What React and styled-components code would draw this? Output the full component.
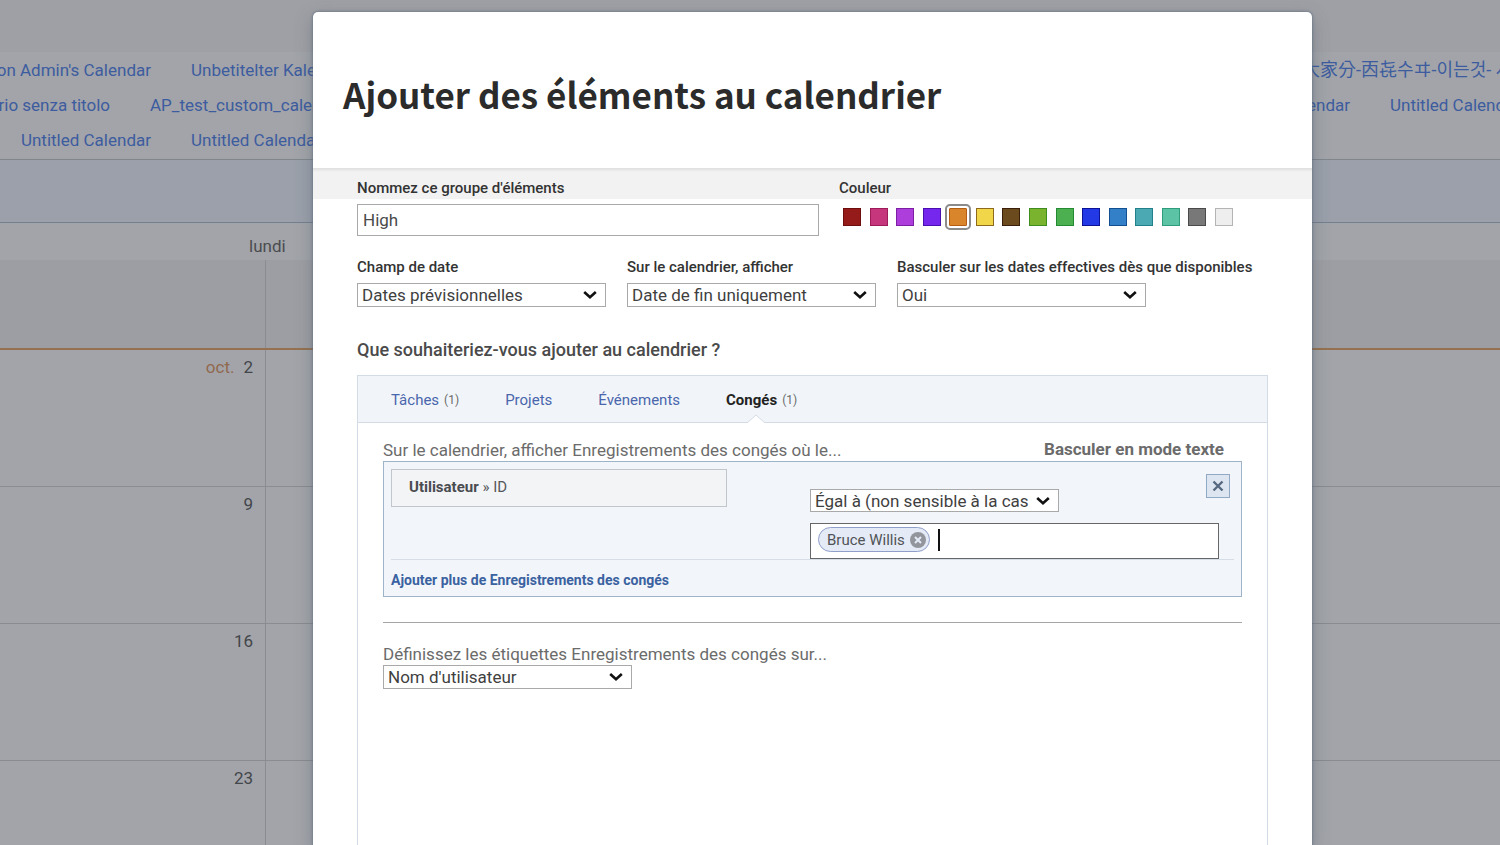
import React, { useState } from "react";
import styled, { createGlobalStyle, css } from "styled-components";

const GlobalStyle = createGlobalStyle`
  *, *::before, *::after { box-sizing: border-box; }
  body {
    margin: 0;
    overflow: hidden;
    font-family: Roboto, "Noto Sans CJK KR", "Noto Sans CJK JP", sans-serif;
    color: #3b3d40;
    background: #a2a4a9;
  }
  button, input, select { font-family: inherit; }
`;

const Page = styled.div`
  position: relative;
  height: 100vh;
  overflow: hidden;
`;

/* ---------- calendar page behind the dialog ---------- */

const CalendarPage = styled.div`
  display: flex;
  flex-direction: column;
  height: 100%;
  background: #a2a4a9;
`;

const TopBar = styled.div`
  flex: none;
  height: 52px;
  background: #9fa0a5;
`;

const CalendarLinks = styled.nav`
  flex: none;
  height: 108px;
  border-bottom: 1px solid #81868c;
`;

const LinkRow = styled.div`
  display: flex;
  height: 35px;
  align-items: center;
  justify-content: space-between;
  white-space: nowrap;
`;

const LinkGroup = styled.div`
  display: flex;
  gap: 40px;
  width: ${(p) => p.$width}px;
  overflow: hidden;
`;

const CalendarLink = styled.a`
  display: flex;
  flex: none;
  justify-content: flex-end;
  width: ${(p) => (p.$width ? `${p.$width}px` : "auto")};
  font-size: ${(p) => p.$size || 17}px;
  line-height: 30px;
  color: #3d5c9f;
  text-decoration: none;
`;

const Toolbar = styled.div`
  flex: none;
  height: 63px;
  background: #9ba0aa;
  border-bottom: 1px solid #748090;
`;

const DayNames = styled.div`
  flex: none;
  height: 37px;
  padding-left: 249px;
  font-size: 17px;
  line-height: 46px;
  color: #4b4c50;
`;

const Week = styled.div`
  display: flex;
  flex: none;
  height: ${(p) => (p.$past ? 90 : 137)}px;
  background: ${(p) => (p.$past ? "#9d9ea3" : "transparent")};
  border-bottom: ${(p) => (p.$past ? "2px solid #95714f" : "1px solid #898c91")};
`;

const Day = styled.div`
  width: 266px;
  padding: 5px 12px;
  border-right: 1px solid #898c91;
  font-size: 17px;
  line-height: 24px;
  text-align: right;
  color: #43464b;
`;

const Month = styled.span`
  margin-right: 9px;
  color: #91694f;
`;

/* ---------- dialog ---------- */

const Overlay = styled.div`
  position: absolute;
  inset: 0;
  display: flex;
  padding: 12px 188px 0 313px;
`;

const Dialog = styled.section`
  display: flex;
  flex: 1;
  flex-direction: column;
  min-width: 0;
  background: #fff;
  border-radius: 5px 5px 0 0;
  box-shadow: 0 0 2px 1px rgba(90, 105, 125, 0.5), 0 6px 18px rgba(60, 75, 95, 0.35);
`;

const DialogHeader = styled.header`
  flex: none;
  height: 156px;
  padding: 54px 30px 0;
`;

const Title = styled.h1`
  margin: 0;
  font-family: "Noto Sans CJK SC", "Noto Sans", sans-serif;
  font-size: 35px;
  font-weight: 700;
  line-height: 56px;
  color: #2b2b2b;
  white-space: nowrap;
`;

const Form = styled.form`
  display: flex;
  flex: 1;
  flex-direction: column;
  padding: 10px 44px 0;
  background: linear-gradient(#dedede 0, #e8e8e8 2px, #f2f2f2 4px, #f2f2f2 31px, #fff 31px);
`;

const FieldRow = styled.div`
  display: flex;
  gap: ${(p) => p.$gap}px;
  margin-bottom: ${(p) => p.$after}px;
`;

const Field = styled.div`
  display: flex;
  flex: none;
  flex-direction: column;
  gap: 6px;
  width: ${(p) => p.$width}px;
`;

const labelText = css`
  font-size: 15px;
  font-weight: 500;
  line-height: 20px;
  color: #333;
  white-space: nowrap;
`;

const Label = styled.label`
  ${labelText}
`;

const Swatches = styled.fieldset`
  width: 394px;
  min-width: 0;
  margin: 0;
  padding: 0;
  border: 0;

  legend {
    ${labelText}
    padding: 0;
  }
`;

const SwatchRow = styled.div`
  display: flex;
  justify-content: space-between;
  padding: 10px 0 0 4px;
`;

const Swatch = styled.input`
  appearance: none;
  width: 18px;
  height: 18px;
  margin: 0;
  background: ${(p) => p.$fill};
  border: 1px solid ${(p) => p.$edge};

  &:checked {
    outline: 2px solid #8b8b8b;
    outline-offset: 2px;
    border-radius: 1px;
  }
`;

const TextInput = styled.input`
  height: 32px;
  padding: 0 5px;
  border: 1px solid #a9a9a9;
  border-radius: 0;
  font-size: 17px;
  color: #4a4a4a;
`;

const SelectBox = styled.div`
  position: relative;
  width: 249px;
  height: 24px;

  svg {
    position: absolute;
    top: 7px;
    right: 9px;
    pointer-events: none;
  }
`;

const NativeSelect = styled.select`
  appearance: none;
  width: 100%;
  height: 100%;
  padding: 0 28px 0 4px;
  background: #fff;
  border: 1px solid #a9a9a9;
  border-radius: 0;
  font-size: 17px;
  color: #3f3f3f;
`;

const Question = styled.h2`
  margin: 0 0 13px;
  font-size: 18px;
  font-weight: 500;
  line-height: 24px;
  color: #4a4a4a;
`;

const Panel = styled.div`
  display: flex;
  flex: 1;
  flex-direction: column;
  border: 1px solid #d3dce6;
  border-bottom: 0;
`;

const Tabs = styled.div`
  display: flex;
  gap: 46px;
  height: 47px;
  padding: 0 33px;
  background: #f1f5f9;
  border-bottom: 1px solid #d3dce6;
`;

const Tab = styled.button`
  position: relative;
  display: flex;
  align-items: center;
  gap: 5px;
  height: 48px;
  padding: 0;
  background: none;
  border: 0;
  font-size: 15px;
  font-weight: ${(p) => (p.$active ? 700 : 400)};
  color: ${(p) => (p.$active ? "#222" : "#4a66ac")};

  svg {
    position: absolute;
    bottom: 1px;
    left: 20px;
  }
`;

const Count = styled.span`
  font-size: 12px;
  font-weight: 400;
  color: #6b6b6b;
`;

const PanelBody = styled.div`
  padding: 16px 25px 0;
`;

const SectionHead = styled.div`
  display: flex;
  align-items: flex-start;
  justify-content: space-between;
  padding-right: 18px;
`;

const Caption = styled.label`
  display: block;
  font-size: 17px;
  line-height: 22px;
  color: #6b6b6b;
`;

const TextModeButton = styled.button`
  padding: 0;
  background: none;
  border: 0;
  font-size: 17px;
  font-weight: 700;
  line-height: 20px;
  color: #6b6b6b;
`;

const FilterBox = styled.div`
  padding: 7px 7px 5px;
  background: #f2f6fa;
  border: 1px solid #9db3c7;
`;

const Filter = styled.div`
  display: flex;
  height: 91px;
  border-bottom: 1px solid #d5dde6;
`;

const FilterField = styled.div`
  flex: none;
  width: 336px;
  height: 38px;
  padding: 0 17px;
  background: #f3f4f6;
  border: 1px solid #c0c6cc;
  font-size: 15px;
  line-height: 35px;
  color: #55585c;

  strong { font-weight: 700; color: #4a4c50; }
`;

const FilterRule = styled.div`
  display: flex;
  flex: 1;
  flex-direction: column;
  gap: 11px;
  min-width: 0;
  margin-left: 83px;
  padding-top: 20px;
`;

const TokenInput = styled.div`
  display: flex;
  flex: none;
  align-items: center;
  gap: 8px;
  height: 36px;
  margin-right: -13px;
  padding: 0 7px 3px;
  background: #fff;
  border: 1px solid #666;

  input {
    flex: 1;
    min-width: 0;
    height: 24px;
    padding: 0;
    border: 0;
    outline: 0;
    font-size: 17px;
  }
`;

const Caret = styled.span`
  width: 2px;
  height: 22px;
  background: #111;
`;

const Token = styled.span`
  display: flex;
  align-items: center;
  gap: 5px;
  height: 25px;
  padding: 0 3px 0 8px;
  background: #e4ebf6;
  border: 1px solid #8f9fc9;
  border-radius: 13px;
  font-size: 15px;
  color: #505357;
  white-space: nowrap;
`;

const TokenRemove = styled.button`
  display: flex;
  padding: 0;
  background: none;
  border: 0;
`;

const RemoveFilter = styled.button`
  display: flex;
  flex: none;
  align-items: center;
  justify-content: center;
  width: 24px;
  height: 24px;
  margin: 5px 4px 0 0;
  padding: 0;
  background: #dde6f0;
  border: 1px solid #90a9c4;
`;

const AddMore = styled.a`
  display: block;
  margin-top: 10px;
  padding-bottom: 1px;
  font-size: 14px;
  font-weight: 700;
  line-height: 20px;
  color: #3b62a0;
  text-decoration: none;
`;

const Divider = styled.hr`
  margin: 25px 0 20px;
  border: 0;
  border-top: 1px solid #a6a6a6;
`;

const COLORS = [
  ["Rouge", "#951b1b", "#6e0d0d"],
  ["Rose", "#c6367c", "#9c1c5a"],
  ["Violet", "#ad3edb", "#7c1fa5"],
  ["Indigo", "#7527ee", "#4a0fb0"],
  ["Orange", "#d9852b", "#b55d12"],
  ["Jaune", "#f2d64a", "#8d6a1c"],
  ["Marron", "#6b4a1e", "#3a200a"],
  ["Vert clair", "#7ab32e", "#3f8d1e"],
  ["Vert", "#4caf50", "#248a34"],
  ["Bleu", "#2439e6", "#0c1396"],
  ["Azur", "#3480c8", "#12508f"],
  ["Sarcelle", "#4ba9b4", "#21808c"],
  ["Menthe", "#5cc4a5", "#2f9c7d"],
  ["Gris", "#787878", "#4a4a4a"],
  ["Blanc", "#eeeeee", "#b4b4b4"],
];

function Select({ id, label, options }) {
  return (
    <SelectBox>
      <NativeSelect id={id} aria-label={label}>
        {options.map((o) => (
          <option key={o}>{o}</option>
        ))}
      </NativeSelect>
      <svg width="14" height="10" viewBox="0 0 14 10" fill="none" aria-hidden="true">
        <path d="M1.2 2 L7 7.3 L12.8 2" stroke="#111" strokeWidth="2.6" />
      </svg>
    </SelectBox>
  );
}

function Background() {
  return (
    <CalendarPage>
      <TopBar />
      <CalendarLinks>
        <LinkRow>
          <LinkGroup $width={320}>
            <CalendarLink href="#" $width={151}>on Admin's Calendar</CalendarLink>
            <CalendarLink href="#">Unbetitelter Kalender</CalendarLink>
          </LinkGroup>
          <LinkGroup $width={198}>
            <CalendarLink href="#" $size={18}>大家分-㐁㐂수ヰ-이는것- 사</CalendarLink>
          </LinkGroup>
        </LinkRow>
        <LinkRow>
          <LinkGroup $width={320}>
            <CalendarLink href="#" $width={110}>rio senza titolo</CalendarLink>
            <CalendarLink href="#">AP_test_custom_calendar</CalendarLink>
          </LinkGroup>
          <LinkGroup $width={290}>
            <CalendarLink href="#" $width={140}>Untitled Calendar</CalendarLink>
            <CalendarLink href="#">Untitled Calendar</CalendarLink>
          </LinkGroup>
        </LinkRow>
        <LinkRow>
          <LinkGroup $width={320}>
            <CalendarLink href="#" $width={151}>Untitled Calendar</CalendarLink>
            <CalendarLink href="#">Untitled Calendar</CalendarLink>
          </LinkGroup>
        </LinkRow>
      </CalendarLinks>
      <Toolbar />
      <DayNames>lundi</DayNames>
      <Week $past>
        <Day />
      </Week>
      <Week>
        <Day>
          <Month>oct.</Month>2
        </Day>
      </Week>
      <Week>
        <Day>9</Day>
      </Week>
      <Week>
        <Day>16</Day>
      </Week>
      <Week>
        <Day>23</Day>
      </Week>
    </CalendarPage>
  );
}

const TABS = [
  { name: "Tâches", count: 1 },
  { name: "Projets" },
  { name: "Événements" },
  { name: "Congés", count: 1 },
];

export default function App() {
  const [color, setColor] = useState("Orange");
  const [tab, setTab] = useState("Congés");

  return (
    <Page>
      <GlobalStyle />
      <Background />
      <Overlay>
        <Dialog role="dialog" aria-labelledby="dialog-title">
          <DialogHeader>
            <Title id="dialog-title">Ajouter des éléments au calendrier</Title>
          </DialogHeader>
          <Form>
            <FieldRow $gap={20} $after={21}>
              <Field $width={462}>
                <Label htmlFor="group-name">Nommez ce groupe d'éléments</Label>
                <TextInput id="group-name" defaultValue="High" />
              </Field>
              <Swatches>
                <legend>Couleur</legend>
                <SwatchRow>
                  {COLORS.map(([name, fill, edge]) => (
                    <Swatch
                      key={name}
                      type="radio"
                      name="color"
                      aria-label={name}
                      $fill={fill}
                      $edge={edge}
                      checked={color === name}
                      onChange={() => setColor(name)}
                    />
                  ))}
                </SwatchRow>
              </Swatches>
            </FieldRow>
            <FieldRow $gap={21} $after={31}>
              <Field $width={249}>
                <Label htmlFor="date-field">Champ de date</Label>
                <Select id="date-field" options={["Dates prévisionnelles"]} />
              </Field>
              <Field $width={249}>
                <Label htmlFor="show-on">Sur le calendrier, afficher</Label>
                <Select id="show-on" options={["Date de fin uniquement"]} />
              </Field>
              <Field $width={249}>
                <Label htmlFor="actual">Basculer sur les dates effectives dès que disponibles</Label>
                <Select id="actual" options={["Oui"]} />
              </Field>
            </FieldRow>
            <Question>Que souhaiteriez-vous ajouter au calendrier ?</Question>
            <Panel>
              <Tabs role="tablist">
                {TABS.map(({ name, count }) => (
                  <Tab
                    key={name}
                    type="button"
                    role="tab"
                    aria-selected={tab === name}
                    $active={tab === name}
                    onClick={() => setTab(name)}
                  >
                    {name}
                    {count && <Count>({count})</Count>}
                    {tab === name && (
                      <svg width="20" height="9" viewBox="0 0 20 9" aria-hidden="true">
                        <path d="M1 9 L10 1 L19 9" fill="#fff" stroke="#d3dce6" />
                      </svg>
                    )}
                  </Tab>
                ))}
              </Tabs>
              <PanelBody>
                <SectionHead>
                  <Caption as="span">Sur le calendrier, afficher Enregistrements des congés où le...</Caption>
                  <TextModeButton type="button">Basculer en mode texte</TextModeButton>
                </SectionHead>
                <FilterBox>
                  <Filter>
                    <FilterField>
                      <strong>Utilisateur</strong> » ID
                    </FilterField>
                    <FilterRule>
                      <Select label="Condition" options={["Égal à (non sensible à la cas"]} />
                      <TokenInput>
                        <Token>
                          Bruce Willis
                          <TokenRemove type="button" aria-label="Retirer Bruce Willis">
                            <svg width="16" height="16" viewBox="0 0 16 16" aria-hidden="true">
                              <circle cx="8" cy="8" r="8" fill="#92969c" />
                              <path d="M5 5 L11 11 M11 5 L5 11" stroke="#e4ebf6" strokeWidth="2" />
                            </svg>
                          </TokenRemove>
                        </Token>
                        <Caret />
                        <input aria-label="Utilisateur" />
                      </TokenInput>
                    </FilterRule>
                    <RemoveFilter type="button" aria-label="Supprimer le filtre">
                      <svg width="12" height="12" viewBox="0 0 12 12" aria-hidden="true">
                        <path d="M1.5 1.5 L10.5 10.5 M10.5 1.5 L1.5 10.5" stroke="#56687f" strokeWidth="2.4" />
                      </svg>
                    </RemoveFilter>
                  </Filter>
                  <AddMore href="#">Ajouter plus de Enregistrements des congés</AddMore>
                </FilterBox>
                <Divider />
                <Caption htmlFor="label-by">Définissez les étiquettes Enregistrements des congés sur...</Caption>
                <Select id="label-by" options={["Nom d'utilisateur"]} />
              </PanelBody>
            </Panel>
          </Form>
        </Dialog>
      </Overlay>
    </Page>
  );
}
